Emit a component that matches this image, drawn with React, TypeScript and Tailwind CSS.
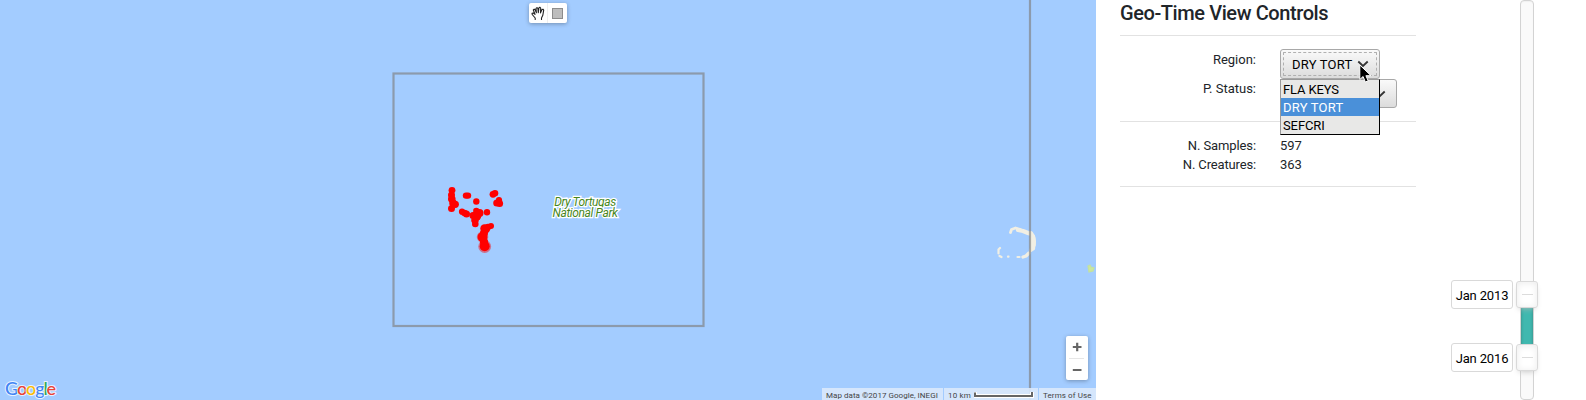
import React from "react";

const dots: [number, number, number][] = [
  [452, 190.3, 3.4], [451.5, 195, 3.5], [451.8, 199, 3.8], [453, 203, 3.8], [455.3, 204.3, 3.6], [451.5, 208.5, 3.5],
  [466, 195.6, 3.2], [468, 195.6, 3.2], [476.3, 201.5, 3.2],
  [493, 194.3, 3.4], [495, 193.2, 3.3], [499, 200.2, 3.1], [496.8, 203, 3.6], [499.6, 203.5, 3.5],
  [462, 211.7, 3.1], [464.5, 213, 3.3], [466.5, 214, 3.5], [487, 212.2, 3.2],
  [476.3, 211, 3.2], [479.5, 213, 4], [473, 215.5, 3.6], [476.5, 216, 4.8], [475, 220, 3.8], [475.3, 224, 3.3],
  [491, 226, 3], [488, 227, 3.2], [484.5, 228.5, 4.2], [486, 229, 4.2], [484, 233, 4], [482.5, 237, 5], [484, 242, 4.2],
];

const Islands = () => (
  <svg className="absolute inset-0" width="1096" height="400" viewBox="0 0 1096 400">
    <g fill="none" stroke="#f1efe4" strokeLinecap="round" strokeLinejoin="round">
      <path d="M1010.500 232.500l1-3 4-1.500 5 1.500" strokeWidth="2.8" />
      <path d="M1018 230l5 1 5 2 3 1" strokeWidth="4.200" />
      <path d="M1031 233q4 5 3 12l-3 5" strokeWidth="3.800" />
      <path d="M1032.500 237v11" strokeWidth="5.400" />
      <path d="M1029 253l-3 3-3 1" strokeWidth="3.300" />
      <path d="M1017.500 257h2M1008 256.700h.5M1000 248l-1.500 1.500v4M999.500 256l2 1" strokeWidth="2.200" />
    </g>
    <path d="M1088 266l2-1 1 2 3 1-1 3-4 1z" fill="#cbe69d" stroke="#c3e2a0" strokeWidth="1.2" />
    <g fill="none" stroke="#808080" strokeOpacity=".65" strokeWidth="2.2">
      <rect x="393.5" y="73.5" width="310" height="252.500" />
      <path d="M1030 0v400" />
    </g>
    <g fill="#f00">
      {dots.map(([x, y, r], i) => (
        <circle key={i} cx={x} cy={y} r={r} />
      ))}
      <circle cx="484.7" cy="246.5" r="6.4" opacity=".45" />
      <circle cx="484.7" cy="246.3" r="5" />
      <circle cx="482.5" cy="237" r="5.8" opacity=".35" />
    </g>
  </svg>
);

const MapPane = () => (
  <section className="relative h-[400px] w-[1096px] shrink-0 overflow-hidden bg-[#a3ccff]">
    <Islands />
    <div className="absolute left-[529px] top-[3px] flex h-5 w-[38px] rounded-[2px] bg-white shadow-[0_1px_4px_rgba(0,0,0,0.3)]">
      <div className="flex w-[19px] items-center justify-center border-r border-[#eeeeee]">
        <svg width="14" height="15" viewBox="0 0 14 15" fill="none" stroke="#222" strokeWidth="1.1" strokeLinejoin="round" strokeLinecap="round">
          <path d="M4.200 13.500v-1.500L1.200 8.500l-.2-1.300 1.300-.2L4 8.300 2.300 4l.9-.9.9.6 1.300 3L5 2.400l1-.8.9.8.4 4.300.6-4.800.9-.7.9.9-.2 4.800L11 3.500l1-.3.7.9-.9 5.200-1.300 2.600v1.600" />
        </svg>
      </div>
      <div className="flex flex-1 items-center justify-center">
        <div className="size-[11px] border border-[#8c8c8c] bg-[#bdbdbd]" />
      </div>
    </div>
    <div className="absolute left-[545px] top-[197px] w-20 text-center text-[12px] font-normal italic leading-[11px] tracking-[-0.38px] text-[#47861d] [-webkit-text-stroke:2.5px_white] [paint-order:stroke_fill]">
      Dry Tortugas
      <br />
      National Park
    </div>
    <div className="absolute left-[1066px] top-[336px] flex h-11 w-[22px] flex-col items-center rounded-[2px] bg-white shadow-[0_1px_4px_rgba(0,0,0,0.3)]">
      <svg width="22" height="44" viewBox="0 0 22 44">
        <path d="M6.800 11h8.700M11.200 6.700v8.600M6.800 34h8.700" stroke="#666" strokeWidth="2.200" />
        <path d="M3 22.500h15" stroke="#e6e6e6" />
      </svg>
    </div>
    <div className="absolute left-[5px] top-[377px] flex text-[18px] font-medium leading-[22px] tracking-[-1.15px] [font-family:Lato,sans-serif] [-webkit-text-stroke:2px_#e8f2ff] [paint-order:stroke_fill]">
      <span className="text-[#4285f4]">G</span>
      <span className="text-[#ea4335]">o</span>
      <span className="text-[#fbbc05]">o</span>
      <span className="text-[#4285f4]">g</span>
      <span className="text-[#34a853]">l</span>
      <span className="text-[#ea4335]">e</span>
    </div>
    <div className="absolute bottom-0 right-0 flex h-3 gap-px whitespace-nowrap text-[8px] leading-[15px] text-[#444]">
      <div className="w-[121px] bg-[#dae9fc]/90 pl-1"><span className="tracking-[0.04px]">Map data ©2017 Google, INEGI</span></div>
      <div className="flex w-[94px] bg-[#dae9fc]/90 pl-1">
        <span className="w-[26px] tracking-[0.15px]">10 km</span>
        <svg width="60" height="12" viewBox="0 0 60 12">
          <path d="M1 4v4h57V4" fill="none" stroke="#fff" strokeWidth="4" />
          <path d="M1 4.500v3.500h57V4" fill="none" stroke="#666" strokeWidth="2" />
        </svg>
      </div>
      <div className="w-[57px] bg-[#dae9fc]/90 pl-1 tracking-[0.1px]">Terms of Use</div>
    </div>
  </section>
);

const Chevron = () => (
  <svg width="12" height="8" viewBox="0 0 12 8" fill="none" stroke="#333" strokeWidth="1.8">
    <path d="M1.300 1.500L6 6l4.700-4.500" />
  </svg>
);

const Cursor = () => (
  <svg className="absolute left-[78px] top-[14px]" width="14" height="20" viewBox="0 0 14 20">
    <path d="M.8 1v14.500l3.300-3 2.200 5.500 2.900-1.200-2.300-5.100H12z" fill="#000" stroke="#fff" strokeWidth="1" />
  </svg>
);

const RegionSelect = () => (
  <div className="relative z-10 h-[30px] w-[100px] rounded-[3px] border border-[#a8a8a8] bg-linear-to-b from-[#fafafa] to-[#dcdcdc] p-[2px]">
    <div className="flex h-full items-center rounded-[1px] border border-dashed border-[#b0b0b0] pl-[8px] text-black">
      <span className="w-[65px] tracking-[0.2px]">DRY TORT</span>
      <Chevron />
    </div>
    <ul className="absolute -left-px top-[29px] w-[100px] border border-black border-l-[#999] border-t-[#999] bg-[#e8e8e7] leading-[20px] text-black">
      <li className="h-[18px] pl-[2px] tracking-[-0.15px]">FLA KEYS</li>
      <li className="h-[18px] bg-[#4a90d9] pl-[2px] tracking-[0.2px] text-white">DRY TORT</li>
      <li className="h-[18px] pl-[2px] tracking-[-0.1px]">SEFCRI</li>
    </ul>
    <Cursor />
  </div>
);

const Controls = () => (
  <section className="ml-6 w-[296px] shrink-0 text-[13px] leading-[19px] text-[#212529]">
    <h1 className="h-[35px] pt-px text-[20px] font-medium leading-6 tracking-[-0.41px]">Geo-Time View Controls</h1>
    <div className="flex h-[86px] gap-6 border-t border-[#e2e2e2]">
      <div className="w-[136px] pt-[14px] text-right">
        <div className="h-[29px]">Region:</div>
        <div>P. Status:</div>
      </div>
      <div className="pt-[13px]">
        <RegionSelect />
        <div className="flex h-[29px] w-[117px] items-center justify-end rounded-[3px] border border-[#a8a8a8] bg-linear-to-b from-[#fafafa] to-[#dcdcdc] pr-[10px]">
          <Chevron />
        </div>
      </div>
    </div>
    <div className="grid h-[66px] grid-cols-[136px_1fr] content-start gap-x-6 border-y border-[#e2e2e2] pt-[14px]">
      <div className="text-right tracking-[-0.1px]">N. Samples:</div>
      <div className="tracking-[-0.1px]">597</div>
      <div className="text-right tracking-[-0.15px]">N. Creatures:</div>
      <div className="tracking-[-0.1px]">363</div>
    </div>
  </section>
);

const Handle = ({ label }: { label: string }) => (
  <div className="flex h-[29px] items-center gap-[3px]">
    <div className="flex h-[29px] w-[62px] items-center justify-center whitespace-nowrap rounded-[3px] border border-[#d9d9d9] bg-white pt-[2px] tracking-[-0.15px]">{label}</div>
    <div className="flex h-[27px] w-[22px] items-center justify-center rounded-[3px] border border-[#d9d9d9] bg-white shadow-[inset_0_0_1px_#fff,inset_0_1px_7px_#ebebeb,0_3px_6px_-3px_#bbb]">
      <div className="h-px w-[11px] bg-[#dcdcdc]" />
    </div>
  </div>
);

const TimeSlider = () => (
  <section className="relative ml-[35px] h-[400px] w-[87px] text-[13px] text-black">
    <div className="ml-[69px] h-[400px] w-[14px] rounded-[4px] border border-[#d3d3d3] bg-[#fafafa] pt-[294px] shadow-[inset_0_1px_1px_#f0f0f0]">
      <div className="h-[62px] bg-[#3fb8af] shadow-[inset_0_0_3px_rgba(51,51,51,0.45)]" />
    </div>
    <div className="absolute left-0 top-[280px] flex flex-col gap-[34px]">
      <Handle label="Jan 2013" />
      <Handle label="Jan 2016" />
    </div>
  </section>
);

export default function App() {
  return (
    <main className="flex h-[400px] w-[1586px] overflow-hidden bg-white [font-family:Roboto,sans-serif]">
      <MapPane />
      <Controls />
      <TimeSlider />
    </main>
  );
}
